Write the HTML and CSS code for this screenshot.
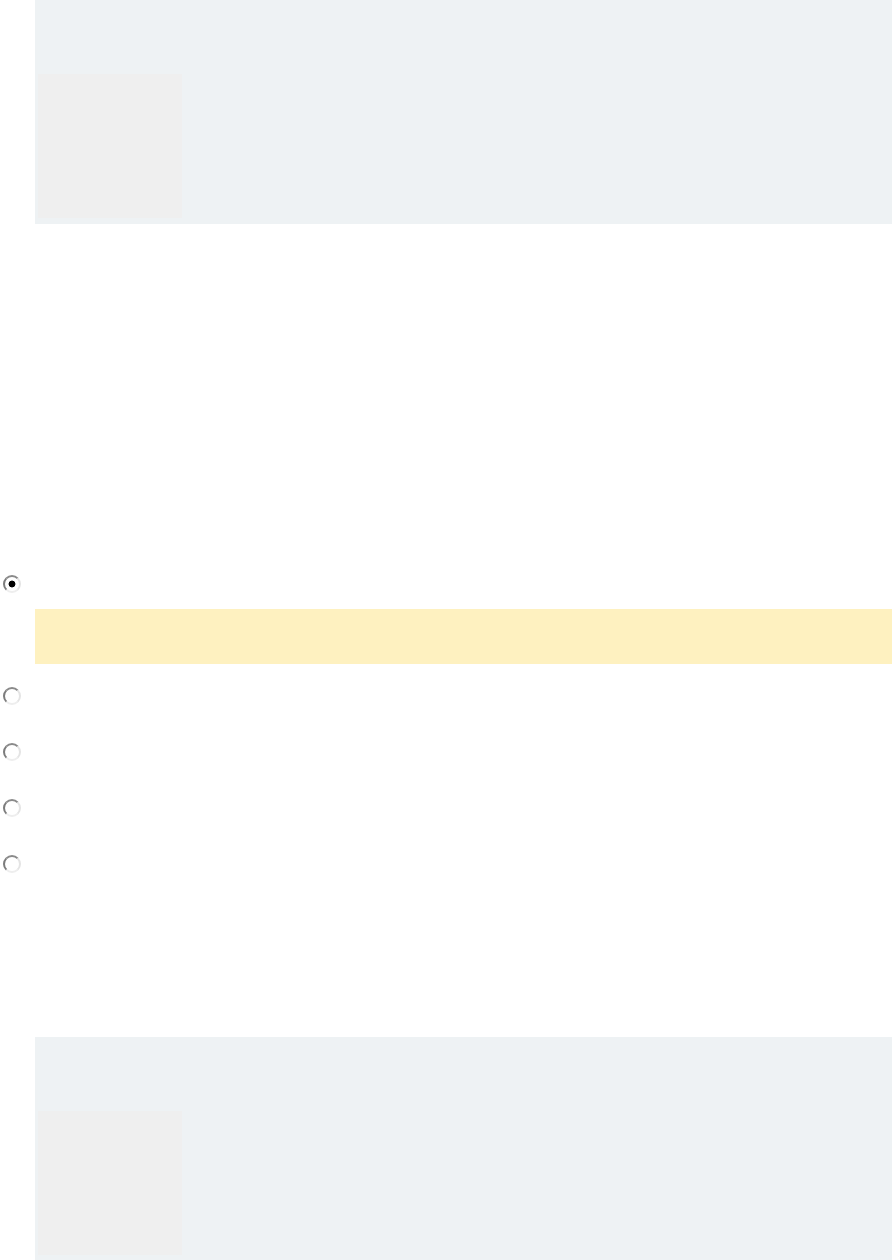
FILE: index.html
```html
<!DOCTYPE html>
<html lang="en">
<head>
<meta charset="utf-8">
<title>Options</title>
<link rel="stylesheet" href="styles.css">
</head>
<body>
  <div class="card">
    <div class="thumb"></div>
  </div>

  <form class="options">
    <div class="option">
      <input class="radio" type="radio" name="choice" checked>
    </div>
    <div class="note"></div>
    <div class="option option-first">
      <input class="radio" type="radio" name="choice">
    </div>
    <div class="option">
      <input class="radio" type="radio" name="choice">
    </div>
    <div class="option">
      <input class="radio" type="radio" name="choice">
    </div>
    <div class="option">
      <input class="radio" type="radio" name="choice">
    </div>
  </form>

  <div class="card card-bottom">
    <div class="thumb"></div>
  </div>
</body>
</html>
```
FILE: styles.css
```css
html, body {
  margin: 0;
  padding: 0;
  background: #ffffff;
  font-family: "Liberation Sans", Arial, sans-serif;
}

body {
  width: 892px;
  height: 1260px;
  overflow: hidden;
}

.card {
  margin-left: 35px;
  height: 224px;
  box-sizing: border-box;
  padding: 74px 0 6px 3px;
  background: #eef2f4;
}

.thumb {
  width: 144px;
  height: 144px;
  background: #efefef;
}

.options {
  display: flex;
  flex-direction: column;
  margin: 351px 0 0 0;
}

.option {
  display: flex;
  align-items: center;
  height: 18px;
  padding-left: 3px;
  margin-top: 38px;
}

.option:first-child {
  margin-top: 0;
}

.option-first {
  margin-top: 23px;
}

.note {
  margin: 16px 0 0 35px;
  height: 55px;
  background: #fef1c0;
}

.radio {
  appearance: none;
  -webkit-appearance: none;
  margin: 0;
  width: 18px;
  height: 18px;
  box-sizing: border-box;
  border-radius: 50%;
  border: 2px solid;
  border-color: #8a8a8a #e4e4e4 #eeeeee #7c7c7c;
  background: #ffffff;
}

.radio:checked {
  background: radial-gradient(circle, #000000 0 3px, #ffffff 3.8px);
}

.card-bottom {
  margin-top: 164px;
}
```
